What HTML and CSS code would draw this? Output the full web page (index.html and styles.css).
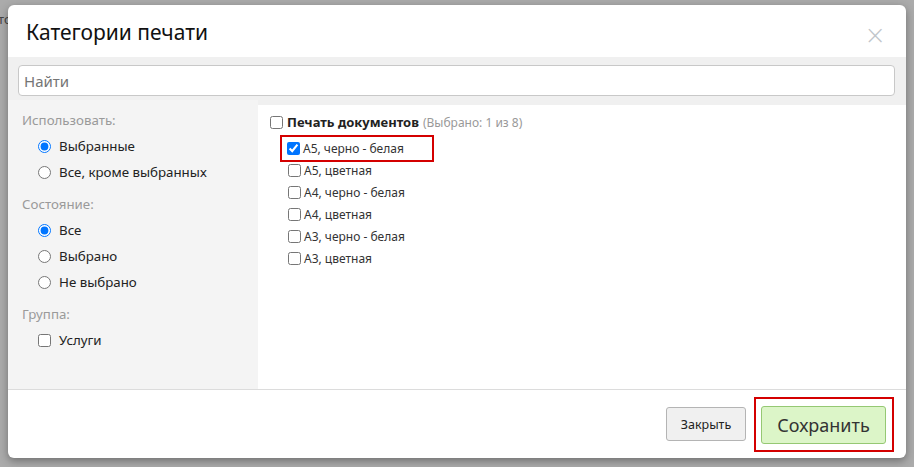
FILE: index.html
```html
<!DOCTYPE html>
<html lang="ru">
<head>
<meta charset="utf-8">
<link rel="stylesheet" href="styles.css">
</head>
<body>
<div class="backdrop">
  <span class="bg-text">то</span>
  <div class="modal">
    <div class="modal-header">
      <h4 class="modal-title">Категории печати</h4>
      <span class="close">&times;</span>
    </div>
    <div class="search">
      <input class="search-input" type="text" placeholder="Найти">
    </div>
    <div class="modal-body">
      <div class="filters">
        <div class="f-title">Использовать:</div>
        <label class="f-item"><input type="radio" name="use" checked><span>Выбранные</span></label>
        <label class="f-item"><input type="radio" name="use"><span>Все, кроме выбранных</span></label>
        <div class="f-title">Состояние:</div>
        <label class="f-item"><input type="radio" name="st" checked><span>Все</span></label>
        <label class="f-item"><input type="radio" name="st"><span>Выбрано</span></label>
        <label class="f-item"><input type="radio" name="st"><span>Не выбрано</span></label>
        <div class="f-title">Группа:</div>
        <label class="f-item"><input type="checkbox"><span>Услуги</span></label>
      </div>
      <div class="tree">
        <label class="group"><input type="checkbox"><b>Печать документов</b> <span class="count">(Выбрано: 1 из 8)</span></label>
        <div class="items">
          <label class="item highlight"><input type="checkbox" checked><span>А5, черно - белая</span></label>
          <label class="item"><input type="checkbox"><span>А5, цветная</span></label>
          <label class="item"><input type="checkbox"><span>А4, черно - белая</span></label>
          <label class="item"><input type="checkbox"><span>А4, цветная</span></label>
          <label class="item"><input type="checkbox"><span>А3, черно - белая</span></label>
          <label class="item"><input type="checkbox"><span>А3, цветная</span></label>
        </div>
      </div>
    </div>
    <div class="modal-footer">
      <button class="btn btn-close">Закрыть</button>
      <div class="save-wrap"><button class="btn btn-save">Сохранить</button></div>
    </div>
  </div>
</div>
</body>
</html>
```

FILE: styles.css
```css
html, body {
  margin: 0;
  padding: 0;
}
body {
  background: #ababab;
  font-family: "Noto Sans", "Open Sans", sans-serif;
  color: #333;
  width: 914px;
  height: 467px;
  overflow: hidden;
}
.backdrop {
  position: relative;
  padding: 5px 8px;
}
.bg-text {
  position: absolute;
  left: -2px;
  top: 10px;
  font-size: 13px;
  color: #444;
}
.modal {
  position: relative;
  width: 898px;
  height: 453px;
  background: #fff;
  border-radius: 6px;
  box-shadow: 0 3px 8px rgba(0, 0, 0, 0.35);
  display: flex;
  flex-direction: column;
  overflow: hidden;
}
.modal-header {
  height: 52px;
  display: flex;
  align-items: center;
  justify-content: space-between;
  padding: 0 20px 0 18px;
  box-sizing: border-box;
}
.modal-title {
  margin: 0;
  font-weight: normal;
  font-size: 21px;
  color: #111;
  padding-top: 1px;
}
.close {
  font-size: 26px;
  color: #c0c5ca;
  line-height: 1;
  padding-top: 7px;
  font-family: "DejaVu Sans", sans-serif;
  font-weight: 300;
}
.search {
  background: #f0f0f0;
  padding: 8px 11px 4px 10px;
}
.search-input {
  display: block;
  width: 100%;
  box-sizing: border-box;
  height: 31px;
  border: 1px solid #c8c8c8;
  border-radius: 4px;
  padding: 0 5px;
  font-family: inherit;
  font-size: 15px;
  color: #333;
  background: #fff;
  outline: none;
}
.search-input::placeholder {
  color: #757575;
}
.modal-body {
  height: 289px;
  display: flex;
  background: #f0f0f0;
  border-bottom: 1px solid #dcdcdc;
}
.filters {
  width: 250px;
  background: #f4f4f4;
  padding: 9px 0 0 14px;
  box-sizing: border-box;
  font-size: 13.3px;
}
.f-title {
  color: #9a9a9a;
  height: 22px;
  line-height: 22px;
  margin-bottom: 2px;
}
.f-item {
  display: flex;
  align-items: center;
  height: 26px;
  padding-left: 16px;
  color: #222;
}
.f-item + .f-title {
  margin-top: 8px;
}
.f-item input {
  margin: 0 8px 0 0;
  width: 13px;
  height: 13px;
}
.tree {
  flex: 1;
  background: #fff;
  margin-top: 5px;
  padding: 6px 0 0 12px;
  font-size: 12px;
  color: #333;
}
.group {
  display: flex;
  align-items: center;
  height: 22px;
  margin-bottom: 4px;
}
.group input {
  margin: 0 4px 0 0;
  width: 13px;
  height: 13px;
}
.group b {
  font-size: 13px;
  color: #222;
  margin-right: 4px;
}
.count {
  color: #999;
  font-size: 12px;
}
.items {
  padding-left: 18px;
}
.item {
  display: flex;
  align-items: center;
  height: 22px;
  width: max-content;
}
.item input {
  margin: 0 3px 0 0;
  width: 13px;
  height: 13px;
}
.item.highlight {
  outline: 2px solid #d40000;
  outline-offset: 0;
  height: 23px;
  width: 145px;
  padding-left: 5px;
  margin-left: -6px;
  margin-bottom: -1px;
}
.modal-footer {
  flex: 1;
  display: flex;
  align-items: center;
  justify-content: flex-end;
  padding-right: 12px;
  gap: 8px;
}
.btn {
  font-family: inherit;
  border-radius: 3px;
  cursor: pointer;
}
.btn-close {
  height: 34px;
  width: 80px;
  background: #f0f0f0;
  border: 1px solid #b4b4b4;
  font-size: 12.5px;
  color: #222;
}
.save-wrap {
  border: 2px solid #d40000;
  padding: 7px 6px 6px 5px;
  margin-top: 1px;
}
.btn-save {
  display: block;
  height: 38px;
  width: 125px;
  background: #dcf5c8;
  border: 1px solid #95c873;
  font-size: 18px;
  color: #333;
}
```
